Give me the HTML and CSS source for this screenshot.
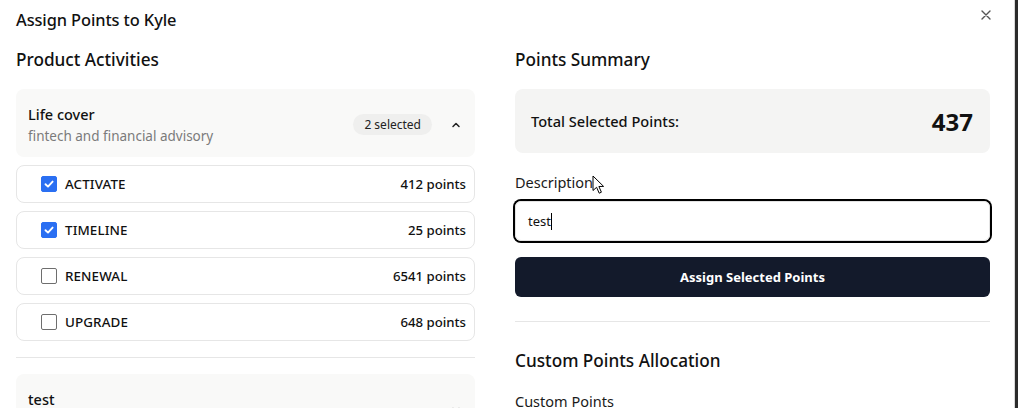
FILE: index.html
```html
<!DOCTYPE html>
<html lang="en">
<head>
<meta charset="utf-8">
<title>Assign Points to Kyle</title>
<link rel="stylesheet" href="styles.css">
</head>
<body>
<div class="dialog">
  <header class="dialog-header">
    <h1 class="dialog-title">Assign Points to Kyle</h1>
    <button class="close-btn" aria-label="Close">
      <svg width="12" height="12" viewBox="0 0 12 12"><path d="M2 2L10 10M10 2L2 10" stroke="#555" stroke-width="1.4" stroke-linecap="round"/></svg>
    </button>
  </header>
  <div class="columns">
    <section class="col col-left">
      <h2 class="section-title">Product Activities</h2>
      <div class="product">
        <div class="product-head">
          <div class="product-info">
            <div class="product-name">Life cover</div>
            <div class="product-sub">fintech and financial advisory</div>
          </div>
          <div class="product-meta">
            <span class="badge">2 selected</span>
            <svg class="chev" width="12" height="12" viewBox="0 0 12 12"><path d="M3 7.5L6 4.5L9 7.5" fill="none" stroke="#222" stroke-width="1.5" stroke-linecap="round" stroke-linejoin="round"/></svg>
          </div>
        </div>
      </div>
      <ul class="activities">
        <li class="activity">
          <span class="cb checked"><svg width="12" height="12" viewBox="0 0 12 12"><path d="M2.5 6.2L5 8.6L9.6 3.6" fill="none" stroke="#fff" stroke-width="1.9" stroke-linecap="round" stroke-linejoin="round"/></svg></span>
          <span class="act-name">ACTIVATE</span>
          <span class="act-points">412 points</span>
        </li>
        <li class="activity">
          <span class="cb checked"><svg width="12" height="12" viewBox="0 0 12 12"><path d="M2.5 6.2L5 8.6L9.6 3.6" fill="none" stroke="#fff" stroke-width="1.9" stroke-linecap="round" stroke-linejoin="round"/></svg></span>
          <span class="act-name">TIMELINE</span>
          <span class="act-points">25 points</span>
        </li>
        <li class="activity">
          <span class="cb"></span>
          <span class="act-name">RENEWAL</span>
          <span class="act-points">6541 points</span>
        </li>
        <li class="activity">
          <span class="cb"></span>
          <span class="act-name">UPGRADE</span>
          <span class="act-points">648 points</span>
        </li>
      </ul>
      <hr class="divider">
      <div class="product">
        <div class="product-head">
          <div class="product-info">
            <div class="product-name">test</div>
            <div class="product-sub">&nbsp;</div>
          </div>
          <div class="product-meta">
            <svg class="chev chev-down" width="12" height="12" viewBox="0 0 12 12"><path d="M3 4.5L6 7.5L9 4.5" fill="none" stroke="#222" stroke-width="1.5" stroke-linecap="round" stroke-linejoin="round"/></svg>
          </div>
        </div>
      </div>
    </section>
    <section class="col col-right">
      <h2 class="section-title">Points Summary</h2>
      <div class="summary">
        <span class="summary-label">Total Selected Points:</span>
        <span class="summary-value">437</span>
      </div>
      <label class="field-label">Description</label>
      <div class="input focused"><span class="input-text">test</span><span class="caret"></span></div>
      <button class="primary-btn">Assign Selected Points</button>
      <hr class="divider divider-right">
      <h2 class="section-title custom-title">Custom Points Allocation</h2>
      <label class="field-label custom-label">Custom Points</label>
    </section>
  </div>
  <svg class="cursor" width="13" height="20" viewBox="0 0 13 20"><path d="M1 1L1 15.5L4.6 12.3L7.2 18.2L9.4 17.2L6.9 11.5L11.6 11.4Z" fill="#fff" stroke="#000" stroke-width="1" stroke-linejoin="round"/></svg>
</div>
</body>
</html>
```

FILE: styles.css
```css
* { box-sizing: border-box; }
html, body { margin: 0; padding: 0; }
body {
  width: 1018px;
  height: 408px;
  overflow: hidden;
  background: #2b2b2b;
  font-family: "Noto Sans", "Open Sans", sans-serif;
  color: #111;
}
.dialog {
  position: relative;
  width: 1015px;
  height: 408px;
  background: #fff;
  border-right: 1px solid #d9d9d9;
  overflow: hidden;
}
.dialog-header {
  display: flex;
  justify-content: space-between;
  align-items: flex-start;
  padding: 9px 22px 0 16px;
  height: 48px;
}
.dialog-title {
  margin: 0;
  font-size: 16.4px;
  font-weight: 500;
  line-height: 22px;
  letter-spacing: -0.1px;
}
.close-btn {
  border: 0;
  background: none;
  padding: 0;
  width: 12px;
  height: 12px;
  margin-top: 0;
  display: flex;
}
.columns {
  display: grid;
  grid-template-columns: 459px 475px;
  column-gap: 40px;
  padding: 0 24px 0 16px;
}
.col { display: flex; flex-direction: column; }
.section-title {
  margin: 0;
  font-size: 17.2px;
  font-weight: 500;
  line-height: 24px;
  height: 24px;
  margin-bottom: 17px;
}
.product {
  background: #f9f9f8;
  border-radius: 8px;
}
.product-head {
  display: flex;
  align-items: center;
  justify-content: space-between;
  padding: 14px 13px 11px 12px;
  min-height: 68px;
}
.product-name {
  font-size: 14.5px;
  font-weight: 500;
  line-height: 20px;
}
.product-sub {
  font-size: 13.5px;
  color: #7b7b7b;
  line-height: 20px;
  margin-top: 2px;
}
.product-meta { display: flex; align-items: center; gap: 18px; }
.badge {
  background: #efefee;
  border-radius: 999px;
  padding: 2px 11px;
  font-size: 12px;
  line-height: 17px;
  color: #222;
}
.chev { display: block; }
.activities {
  list-style: none;
  margin: 8px 0 0 0;
  padding: 0;
  display: flex;
  flex-direction: column;
  gap: 8px;
}
.activity {
  display: flex;
  align-items: center;
  height: 38px;
  border: 1px solid #e6e6e6;
  border-radius: 8px;
  padding: 0 8px 0 24px;
}
.cb {
  width: 16px;
  height: 16px;
  border: 1px solid #6e6e6e;
  border-radius: 2px;
  background: #fff;
  display: flex;
  align-items: center;
  justify-content: center;
  flex: none;
}
.cb.checked { background: #2a6ff2; border-color: #2a6ff2; }
.act-name {
  margin-left: 8px;
  font-size: 13.4px;
  font-weight: 500;
  flex: 1;
  letter-spacing: 0.1px;
}
.act-points {
  font-size: 13.2px;
  font-weight: 500;
}
.divider {
  border: 0;
  border-top: 1px solid #e6e6e6;
  margin: 16px 0 16px 0;
  height: 0;
}
.summary {
  background: #f4f4f3;
  border-radius: 8px;
  height: 64px;
  display: flex;
  align-items: center;
  justify-content: space-between;
  padding: 0 17px 0 16px;
}
.summary-label { font-size: 14.6px; font-weight: 500; }
.summary-value { font-size: 24px; font-weight: 700; }
.field-label {
  font-size: 14.5px;
  line-height: 20px;
  margin-top: 19px;
  color: #1a1a1a;
}
.input {
  margin-top: 9px;
  height: 40px;
  border: 1px solid #e3e3e3;
  border-radius: 6px;
  display: flex;
  align-items: center;
  padding: 0 12px;
  font-size: 13px;
}
.input.focused { box-shadow: 0 0 0 2px #000; }
.caret { width: 1px; height: 17px; background: #000; margin-left: 0; }
.primary-btn {
  margin-top: 16px;
  height: 40px;
  border: 0;
  border-radius: 6px;
  background: #131a2b;
  color: #fff;
  font-family: inherit;
  font-size: 13px;
  font-weight: 700;
}
.divider-right { margin: 24px 0 0 0; }
.custom-title { margin-top: 27px; margin-bottom: 0; }
.custom-label { margin-top: 18px; }
.cursor {
  position: absolute;
  left: 592px;
  top: 175px;
}
```
